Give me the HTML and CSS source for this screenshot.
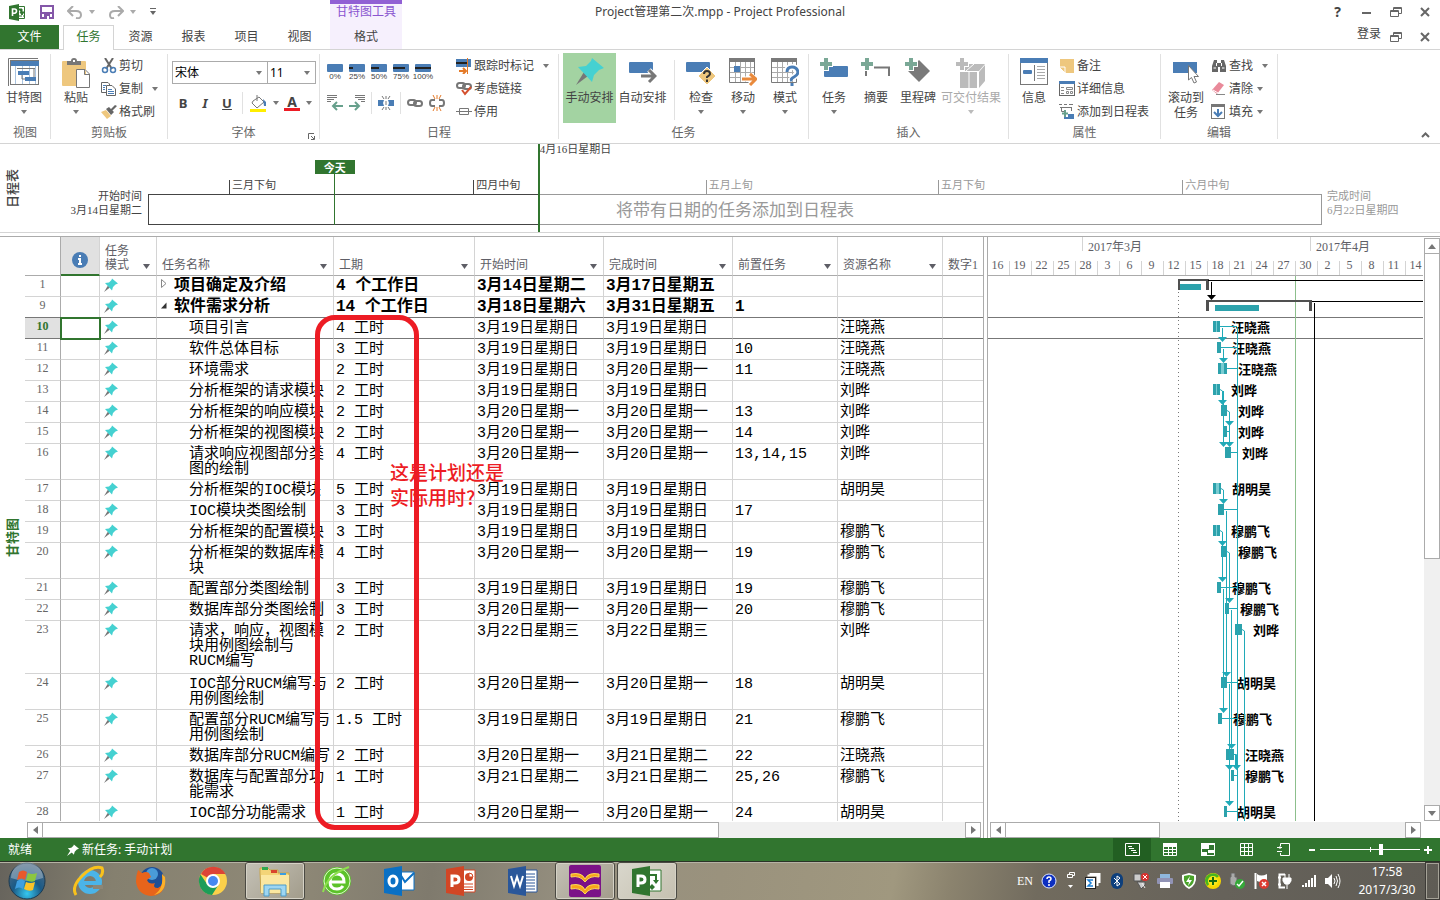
FILE: index.html
```html
<!DOCTYPE html>
<html lang="zh-CN">
<head>
<meta charset="utf-8">
<title>Project管理第二次.mpp - Project Professional</title>
<link rel="stylesheet" href="styles.css">
</head>
<body>
<svg class="defs" aria-hidden="true">
  <symbol id="pin" viewBox="0 0 28 28"><path d="M8 15 12 19 0 28Z" fill="#777"/><path d="M16 1 28 11 23 13 18 18 16 25 2 10 10 9 15 4Z" fill="#45d1d1"/></symbol>
  <symbol id="pinw" viewBox="0 0 28 28"><path d="M8 15 12 19 0 28Z" fill="#fff"/><path d="M16 1 28 11 23 13 18 18 16 25 2 10 10 9 15 4Z" fill="#fff"/></symbol>
  <symbol id="car" viewBox="0 0 6 4"><path d="M0 0H6L3 4Z" fill="currentColor"/></symbol>
  <symbol id="car2" viewBox="0 0 8 5"><path d="M0 0H7L3.500 5Z" fill="currentColor"/></symbol>
  <symbol id="restore" viewBox="0 0 12 10"><path d="M3.500 3V.5H11.500V6.500H9M.5 3.500H8.500V9.500H.5ZM3 1.500H11M1 4.500H8" fill="none" stroke="#666"/></symbol>
  <symbol id="close" viewBox="0 0 10 10"><path d="M1 1 9 9M9 1 1 9" stroke="#666" stroke-width="2"/></symbol>
  <symbol id="chain" viewBox="0 0 16 10"><g fill="none" stroke="#777" stroke-width="2"><rect x="1" y="2" width="8" height="5" rx="2.500"/><rect x="7" y="3" width="8" height="5" rx="2.500"/></g></symbol>
  <symbol id="grid" viewBox="0 0 28 26"><rect x="0" y="0" width="26" height="4" fill="#7a7a7a"/><path d="M.5 4V24.500H25.500V4" fill="#fff" stroke="#7a7a7a"/><path d="M6.500 4V24M11.500 4V24M16.500 4V24M21.500 4V24M1 9.500H25M1 14.500H25M1 19.500H25" stroke="#aaa"/></symbol>
  <symbol id="plus" viewBox="0 0 12 12"><path d="M4 0H8V4H12V8H8V12H4V8H0V4H4Z" fill="currentColor"/></symbol>
</svg>

<header class="top">
  <div class="qat">
    <svg width="18" height="17" viewBox="0 0 18 17"><path d="M8 2.500H15.500V14.500H8" fill="#fff" stroke="#31752f"/><path d="M9 5H13V9M11 8H15L13 11ZM9 12H13M14 12H16" stroke="#31752f" fill="#31752f"/><path d="M0 2 10 0V17L0 15Z" fill="#31752f"/><path d="M3.500 12V5H5.500Q7.500 5 7.500 7T5.500 9.200H3.500" stroke="#fff" stroke-width="1.600" fill="none"/></svg>
    <button aria-label="保存"><svg width="14" height="14"><path d="M1 1H13V13H1Z" fill="#fff" stroke="#8457a8" stroke-width="2"/><path d="M1 7H13V9H1ZM4 9H10V14H4Z" fill="#8457a8"/><path d="M7 11H9V14H7Z" fill="#fff"/></svg></button>
    <button class="muted" aria-label="撤销"><svg width="16" height="13"><path d="M6 0 1 5 6 10M2 5H9Q14 5 14 9T9 12" fill="none" stroke="#aaa" stroke-width="2"/></svg><svg class="c"><use href="#car"/></svg></button>
    <button class="muted redo" aria-label="恢复"><svg width="16" height="13"><path d="M10 0 15 5 10 10M14 5H7Q2 5 2 9T6 12" fill="none" stroke="#aaa" stroke-width="2"/></svg><svg class="c"><use href="#car"/></svg></button>
    <button class="custom" aria-label="自定义"><svg width="6" height="8"><path d="M0 .5H6" stroke="#666"/><path d="M0 3H6L3 7Z" fill="#666"/></svg></button>
  </div>
  <h1 class="title">Project管理第二次.mpp - Project Professional</h1>
  <nav class="tabs">
    <button class="file">文件</button><button class="active">任务</button><button>资源</button><button>报表</button><button>项目</button><button>视图</button>
  </nav>
  <div class="context"><span>甘特图工具</span><button>格式</button></div>
  <div class="win"><button class="help" aria-label="帮助">?</button><button aria-label="最小化"><svg width="9" height="4"><path d="M0 3H9" stroke="#666" stroke-width="2"/></svg></button><button aria-label="还原"><svg width="12" height="10"><use href="#restore"/></svg></button><button aria-label="关闭"><svg width="10" height="10"><use href="#close"/></svg></button></div>
  <div class="win two"><a href="#" class="login">登录</a><button aria-label="还原文档"><svg width="12" height="10"><use href="#restore"/></svg></button><button aria-label="关闭文档"><svg width="10" height="10"><use href="#close"/></svg></button></div>
</header>

<section class="ribbon">
  <div class="group g-view"><div class="gb">
    <button class="big"><svg width="32" height="28"><path d="M.5 28V.5H30" fill="none" stroke="#777"/><rect x="2.500" y="2.500" width="28" height="24" fill="#fff" stroke="#777"/><rect x="3" y="3" width="28" height="5" fill="#4a7db5"/><path d="M7.500 8V26M14.500 8V26M21.500 8V26M27.500 8V26" stroke="#aac4e0"/><path d="M9 10.500H20M26 10V20M20 10.500H27M14 16V21H18" stroke="#777" fill="none"/><rect x="10" y="13" width="11" height="4" fill="#4a7db5"/><rect x="17" y="19" width="11" height="4" fill="#4a7db5"/></svg><span>甘特图</span><svg class="c"><use href="#car"/></svg></button>
  </div><h2>视图</h2></div>

  <div class="group g-clip"><div class="gb">
    <button class="big"><svg width="30" height="30"><rect x="1" y="3" width="24" height="25" rx="1" fill="#eec77e"/><path d="M6 7V3H10Q10 0 13 0T16 3H20V7Z" fill="#777"/><rect x="12" y="2" width="2" height="2" fill="#fff"/><path d="M15.500 11.500H24L28.500 16V29.500H15.500ZM23.500 12V16.500H28" fill="#fff" stroke="#777"/></svg><span>粘贴</span><svg class="c"><use href="#car"/></svg></button>
    <div class="col">
      <button><svg width="16" height="16"><path d="M4 0 11 11M12 0 5 11" stroke="#666" stroke-width="2"/><circle cx="4" cy="12" r="2.500" fill="none" stroke="#4a7db5" stroke-width="1.500"/><circle cx="12" cy="12" r="2.500" fill="none" stroke="#4a7db5" stroke-width="1.500"/></svg>剪切</button>
      <button><svg width="16" height="16"><path d="M.5 1.500H7L8.500 3V11.500H.5Z" fill="#fff" stroke="#666"/><path d="M5.500 4.500H11L14.500 8V14.500H5.500Z" fill="#fff" stroke="#666"/><path d="M2 4.500H5M2 6.500H4M2 8.500H4M7 8.500H11M7 10.500H13M7 12.500H13" stroke="#4a7db5"/></svg>复制<svg class="c far"><use href="#car"/></svg></button>
      <button><svg width="16" height="16"><path d="M0 8 5 6 10 12 6 15Z" fill="#eec77e"/><path d="M5 5 8 3 13 8 10 11ZM10 5 14 1 16 2 11 7Z" fill="#666"/></svg>格式刷</button>
    </div>
  </div><h2>剪贴板</h2></div>

  <div class="group g-font"><div class="gb stack">
    <div class="selects"><label class="sel"><select aria-label="字体"><option>宋体</option></select><svg class="c"><use href="#car"/></svg></label><label class="sel size"><select aria-label="字号"><option>11</option></select><svg class="c"><use href="#car"/></svg></label></div>
    <div class="fmt"><button><b>B</b></button><button><i>I</i></button><button><u>U</u></button><hr>
      <button class="w" aria-label="背景色"><svg width="17" height="17"><path d="M3 6 9 2 14 7 7 13 2 8Z" fill="#fff" stroke="#777"/><path d="M7 0V6" stroke="#777"/><path d="M13 4 16 7V11H14Z" fill="#4a7db5"/><rect x="0" y="14" width="16" height="3" fill="#ffee00"/></svg><svg class="c"><use href="#car"/></svg></button>
      <button class="w" aria-label="字体颜色"><span class="fc">A</span><svg class="c"><use href="#car"/></svg></button></div>
  </div><h2>字体<svg class="launch" width="7" height="7"><path d="M.5 6V.5H6M3 3 6 6M6.500 3V6.500H3" fill="none" stroke="#666"/></svg></h2></div>

  <div class="group g-sched"><div class="gb">
    <div class="stack">
      <div class="pcts">
        <button><svg width="16" height="8"><rect width="16" height="8" rx="1" fill="#4a7db5"/></svg>0%</button>
        <button><svg width="16" height="8"><rect width="16" height="8" rx="1" fill="#4a7db5"/><path d="M0 4H4" stroke="#222" stroke-width="2"/></svg>25%</button>
        <button><svg width="16" height="8"><rect width="16" height="8" rx="1" fill="#4a7db5"/><path d="M0 4H8" stroke="#222" stroke-width="2"/></svg>50%</button>
        <button><svg width="16" height="8"><rect width="16" height="8" rx="1" fill="#4a7db5"/><path d="M0 4H12" stroke="#222" stroke-width="2"/></svg>75%</button>
        <button><svg width="16" height="8"><rect width="16" height="8" rx="1" fill="#4a7db5"/><path d="M0 4H16" stroke="#222" stroke-width="2"/></svg>100%</button>
      </div>
      <div class="links">
        <button aria-label="降级"><svg width="17" height="16"><path d="M0 .5H10M0 2.500H10M0 4.500H7M0 6.500H4" stroke="#777"/><path d="M16 11H6M10 7 6 11 10 15" fill="none" stroke="#67a08c" stroke-width="2"/></svg></button>
        <button aria-label="升级"><svg width="17" height="16"><path d="M6 .5H16M6 2.500H16M9 4.500H16M12 6.500H16" stroke="#777"/><path d="M0 11H10M6 7 10 11 6 15" fill="none" stroke="#67a08c" stroke-width="2"/></svg></button><hr>
        <button aria-label="拆分"><svg width="16" height="14"><path d="M0 4H6L5 7 6 10H0ZM16 4H10L11 7 10 10H16Z" fill="#4a7db5"/><path d="M8 0V3M8 11V14M4 0 6 3M12 0 10 3M4 14 6 11M12 14 10 11M8 5V9" stroke="#777"/></svg></button><hr>
        <button aria-label="链接"><svg width="16" height="10"><use href="#chain"/></svg></button>
        <button aria-label="取消链接"><svg width="16" height="16"><path d="M6 5H3Q1 5 1 8T3 11H6M10 5H13Q15 5 15 8T13 11H10" fill="none" stroke="#777" stroke-width="2"/><path d="M8 0V4M4 0 6 4M12 0 10 4M8 12V16M4 16 6 12M12 16 10 12" stroke="#e47a28"/></svg></button>
      </div>
    </div>
    <div class="col">
      <button><svg width="16" height="16"><rect x="0" y="1" width="15" height="8" fill="#4a7db5"/><path d="M0 5H12" stroke="#222" stroke-width="2"/><path d="M11.500 0V16" stroke="#e47a28"/><path d="M3 13H9M7 10 10 13 7 16" fill="none" stroke="#e47a28" stroke-width="2"/></svg>跟踪时标记<svg class="c far"><use href="#car"/></svg></button>
      <button><svg width="16" height="15"><svg width="16" height="10"><use href="#chain"/></svg><path d="M6 9 9 13 15 6" fill="none" stroke="#d4502e" stroke-width="2"/></svg>考虑链接</button>
      <button><svg width="16" height="10"><path d="M0 4.500H16M3.500 1.500H12.500V7.500H3.500Z" fill="none" stroke="#777"/></svg>停用</button>
    </div>
  </div><h2>日程</h2></div>

  <div class="group g-task"><div class="gb">
    <button class="big manual"><svg width="28" height="28"><use href="#pin"/></svg><span>手动安排</span></button>
    <button class="big auto"><svg width="28" height="26"><rect y="4" width="24" height="11" rx="1" fill="#4a7db5"/><path d="M11 18H25M20 12 26 18 20 24" fill="none" stroke="#fff" stroke-width="5"/><path d="M12 18H25M20 12 26 18 20 24" fill="none" stroke="#777" stroke-width="3"/></svg><span>自动安排</span></button><hr>
    <button class="big"><svg width="30" height="28"><rect y="4" width="24" height="10" rx="1" fill="#4a7db5"/><path d="M21 9 30 18 21 27 12 18Z" fill="#eec77e" stroke="#fff"/><path d="M18 16Q18 13 21 13T24 16Q24 17 21 19V20M21 21.500V24" fill="none" stroke="#333" stroke-width="2"/></svg><span>检查</span><svg class="c"><use href="#car"/></svg></button>
    <button class="big"><svg width="28" height="28"><svg width="28" height="26"><use href="#grid"/></svg><rect x="5" y="8" width="6" height="6" fill="#4a7db5"/><path d="M12 21H25M21 16 26 21 21 26" fill="none" stroke="#fff" stroke-width="5"/><path d="M13 21H26M21 16 27 21 21 27" fill="none" stroke="#e98a3c" stroke-width="3"/></svg><span>移动</span><svg class="c"><use href="#car"/></svg></button>
    <button class="big"><svg width="28" height="28"><svg width="28" height="26"><use href="#grid"/></svg><path d="M16 14Q16 9 21 9T26 14Q26 17 23 19T21 23M21 25V28" fill="none" stroke="#fff" stroke-width="6"/><path d="M16 14Q16 9 21 9T27 14Q27 17 23 19T21 23M21 25V28" fill="none" stroke="#4a7db5" stroke-width="3"/></svg><span>模式</span><svg class="c"><use href="#car"/></svg></button>
  </div><h2>任务</h2></div>

  <div class="group g-ins"><div class="gb">
    <button class="big"><svg class="teal" width="28" height="28"><rect x="4" y="8" width="24" height="11" rx="1" fill="#4a7db5"/><path d="M3 0H9V3H13V9H9V13H3Z" fill="#fff"/><svg width="12" height="12"><use href="#plus"/></svg></svg><span>任务</span><svg class="c"><use href="#car"/></svg></button>
    <button class="big"><svg class="teal" width="30" height="28"><path d="M5 18V9.500H28V18" fill="none" stroke="#777" stroke-width="2"/><path d="M3 6H13V12H8V13H3Z" fill="#fff"/><svg width="12" height="12"><use href="#plus"/></svg></svg><span>摘要</span></button>
    <button class="big"><svg class="teal" width="26" height="28"><path d="M14 2 25 13 14 24 3 13Z" fill="#7a7a7a"/><path d="M3 0H9V3H13V9H9V13H3Z" fill="#fff"/><svg width="12" height="12"><use href="#plus"/></svg></svg><span>里程碑</span></button>
    <button class="big wide" disabled><svg width="30" height="30"><path d="M4 13 11 6H29L23 13ZM4 14H21V30H4ZM23 14 29 7V23L23 30Z" fill="#bbb"/><path d="M10 13 18 6M13 14V30" stroke="#fff"/><path d="M3 0H9V3H13V9H9V13H3Z" fill="#fff"/><svg width="12" height="12"><use href="#plus"/></svg></svg><span>可交付结果</span><svg class="c"><use href="#car"/></svg></button>
  </div><h2>插入</h2></div>

  <div class="group g-prop"><div class="gb">
    <button class="big"><svg width="28" height="28"><rect x=".5" y=".5" width="27" height="26" fill="#fff" stroke="#777"/><rect width="28" height="5" fill="#4a7db5"/><rect x="3" y="12" width="9" height="4" rx="1" fill="#4a7db5"/><path d="M14.500 7V23" stroke="#777"/><path d="M17 8.500H25M17 11.500H25M17 14.500H25M17 17.500H25M17 20.500H25" stroke="#aaa"/></svg><span>信息</span></button>
    <div class="col">
      <button><svg width="16" height="16"><path d="M1 1H15V15H7L1 9Z" fill="#eec77e"/><path d="M0 9H6V15Z" fill="#eec77e" stroke="#fff"/></svg>备注</button>
      <button><svg width="16" height="16"><rect x=".5" y=".5" width="15" height="14" fill="#fff" stroke="#666"/><rect width="16" height="3" fill="#4a7db5"/><path d="M2 6.500H5M2 9.500H5M2 12.500H5" stroke="#888"/><path d="M7.500 6.500H13.500V8.500H7.500ZM7.500 10.500H9.500V12.500H7.500ZM11.500 10.500H13.500V12.500H11.500Z" fill="none" stroke="#888"/></svg>详细信息</button>
      <button><svg width="16" height="16"><path d="M0 .5H3M5 .5H8M10 .5H14M1 3.500H13M2.500 4V7.500H5M12.500 4V7" fill="none" stroke="#777"/><path d="M6 6V13M3 9.500H9" stroke="#67a08c" stroke-width="2"/><path d="M9 10H15V15H5V13H9Z" fill="#4a7db5"/></svg>添加到日程表</button>
    </div>
  </div><h2>属性</h2></div>

  <div class="group g-edit"><div class="gb">
    <button class="big"><svg width="26" height="26"><rect y="4" width="24" height="11" fill="#4a7db5"/><path d="M15.500 7.500V22L18.500 19.500 21 25 23.500 24 21 18.500H25.500Z" fill="#fff" stroke="#777"/></svg><span>滚动到任务</span></button>
    <div class="col">
      <button><svg width="16" height="16"><path d="M3 2H6V5H10V2H13L15 8V14H9V9H7V14H1V8Z" fill="#666"/><path d="M2.500 10H5M11 10H13.500M5.500 5V8M10.500 5V8" stroke="#fff"/></svg>查找<svg class="c far"><use href="#car"/></svg></button>
      <button><svg width="16" height="14"><path d="M1 8 8 0 13 3 6 12Z" fill="#e98a9a"/><path d="M2 8 7 11" stroke="#fff"/><path d="M5 12.500H14" stroke="#888"/></svg>清除<svg class="c"><use href="#car"/></svg></button>
      <button><svg width="16" height="16"><rect x=".5" y=".5" width="13" height="14" fill="#fff" stroke="#777"/><rect width="14" height="3" fill="#777"/><path d="M7 5V12M3 8 7 12 11 8" fill="none" stroke="#4a7db5" stroke-width="2"/></svg>填充<svg class="c"><use href="#car"/></svg></button>
    </div>
  </div><h2>编辑</h2></div>
  <button class="collapse" aria-label="折叠功能区"><svg width="9" height="6"><path d="M1 5 4.500 1.500 8 5" fill="none" stroke="#666" stroke-width="2"/></svg></button>
</section>

<section class="timeline">
  <h3 class="rail">日程表</h3>
  <p class="ends start">开始时间<br>3月14日星期二</p>
  <div class="tl">
    <div class="bar">将带有日期的任务添加到日程表</div>
    <span class="tick t1">三月下旬</span><span class="tick t2">四月中旬</span><span class="tick grey t3">五月上旬</span><span class="tick grey t4">五月下旬</span><span class="tick grey t5">六月中旬</span>
    <div class="today"><b>今天</b></div>
    <div class="focus">4月16日星期日</div>
  </div>
  <p class="ends end">完成时间<br>6月22日星期四</p>
</section>

<main>
  <h3 class="rail green">甘特图</h3>
  <div class="pane">
    <div class="clip">
    <table>
      <colgroup><col class="c0"><col class="c1"><col class="c2"><col class="c3"><col class="c4"><col class="c5"><col class="c6"><col class="c7"><col class="c8"><col class="c9"></colgroup>
      <thead><tr><th></th><th class="info"><svg width="16" height="16"><circle cx="8" cy="8" r="8" fill="#4a7db5"/><path d="M8 3V5M6 7H8V12M6 12H10" fill="none" stroke="#fff" stroke-width="2"/></svg></th><th><span>任务<br>模式</span><svg class="k"><use href="#car2"/></svg></th><th>任务名称<svg class="k"><use href="#car2"/></svg></th><th>工期<svg class="k"><use href="#car2"/></svg></th><th>开始时间<svg class="k"><use href="#car2"/></svg></th><th>完成时间<svg class="k"><use href="#car2"/></svg></th><th>前置任务<svg class="k"><use href="#car2"/></svg></th><th>资源名称<svg class="k"><use href="#car2"/></svg></th><th>数字1</th></tr></thead>
      <tbody>
        <tr class="sum"><td>1<td><td><svg class="p"><use href="#pin"/></svg><td><svg class="exp" width="6" height="9"><path d="M.5 .5 5 4.500 .5 8.500Z" fill="#fff" stroke="#888"/></svg>项目确定及介绍<td>4 个工作日<td>3月14日星期二<td>3月17日星期五<td><td><td></tr>
        <tr class="sum"><td>9<td><td><svg class="p"><use href="#pin"/></svg><td><svg class="exp" width="6" height="7"><path d="M5.500 .5V6.500H0Z" fill="#333"/></svg>软件需求分析<td>14 个工作日<td>3月18日星期六<td>3月31日星期五<td>1<td><td></tr>
        <tr class="cur"><td>10<td><td><svg class="p"><use href="#pin"/></svg><td>项目引言<td>4 工时<td>3月19日星期日<td>3月19日星期日<td><td>汪晓燕<td></tr>
        <tr><td>11<td><td><svg class="p"><use href="#pin"/></svg><td>软件总体目标<td>3 工时<td>3月19日星期日<td>3月19日星期日<td>10<td>汪晓燕<td></tr>
        <tr><td>12<td><td><svg class="p"><use href="#pin"/></svg><td>环境需求<td>2 工时<td>3月19日星期日<td>3月20日星期一<td>11<td>汪晓燕<td></tr>
        <tr><td>13<td><td><svg class="p"><use href="#pin"/></svg><td>分析框架的请求模块<td>2 工时<td>3月19日星期日<td>3月19日星期日<td><td>刘晔<td></tr>
        <tr><td>14<td><td><svg class="p"><use href="#pin"/></svg><td>分析框架的响应模块<td>2 工时<td>3月20日星期一<td>3月20日星期一<td>13<td>刘晔<td></tr>
        <tr><td>15<td><td><svg class="p"><use href="#pin"/></svg><td>分析框架的视图模块<td>2 工时<td>3月20日星期一<td>3月20日星期一<td>14<td>刘晔<td></tr>
        <tr><td>16<td><td><svg class="p"><use href="#pin"/></svg><td>请求响应视图部分类<br>图的绘制<td>4 工时<td>3月20日星期一<td>3月20日星期一<td>13,14,15<td>刘晔<td></tr>
        <tr><td>17<td><td><svg class="p"><use href="#pin"/></svg><td>分析框架的IOC模块<td>5 工时<td>3月19日星期日<td>3月19日星期日<td><td>胡明昊<td></tr>
        <tr><td>18<td><td><svg class="p"><use href="#pin"/></svg><td>IOC模块类图绘制<td>3 工时<td>3月19日星期日<td>3月19日星期日<td>17<td><td></tr>
        <tr><td>19<td><td><svg class="p"><use href="#pin"/></svg><td>分析框架的配置模块<td>3 工时<td>3月19日星期日<td>3月19日星期日<td><td>穆鹏飞<td></tr>
        <tr><td>20<td><td><svg class="p"><use href="#pin"/></svg><td>分析框架的数据库模<br>块<td>4 工时<td>3月20日星期一<td>3月20日星期一<td>19<td>穆鹏飞<td></tr>
        <tr><td>21<td><td><svg class="p"><use href="#pin"/></svg><td>配置部分类图绘制<td>3 工时<td>3月19日星期日<td>3月19日星期日<td>19<td>穆鹏飞<td></tr>
        <tr><td>22<td><td><svg class="p"><use href="#pin"/></svg><td>数据库部分类图绘制<td>3 工时<td>3月20日星期一<td>3月20日星期一<td>20<td>穆鹏飞<td></tr>
        <tr class="tall"><td>23<td><td><svg class="p"><use href="#pin"/></svg><td>请求，响应，视图模<br>块用例图绘制与<br>RUCM编写<td>2 工时<td>3月22日星期三<td>3月22日星期三<td><td>刘晔<td></tr>
        <tr><td>24<td><td><svg class="p"><use href="#pin"/></svg><td>IOC部分RUCM编写与<br>用例图绘制<td>2 工时<td>3月20日星期一<td>3月20日星期一<td>18<td>胡明昊<td></tr>
        <tr><td>25<td><td><svg class="p"><use href="#pin"/></svg><td>配置部分RUCM编写与<br>用例图绘制<td>1.5 工时<td>3月19日星期日<td>3月19日星期日<td>21<td>穆鹏飞<td></tr>
        <tr><td>26<td><td><svg class="p"><use href="#pin"/></svg><td>数据库部分RUCM编写<td>2 工时<td>3月20日星期一<td>3月21日星期二<td>22<td>汪晓燕<td></tr>
        <tr><td>27<td><td><svg class="p"><use href="#pin"/></svg><td>数据库与配置部分功<br>能需求<td>1 工时<td>3月21日星期二<td>3月21日星期二<td>25,26<td>穆鹏飞<td></tr>
        <tr><td>28<td><td><svg class="p"><use href="#pin"/></svg><td>IOC部分功能需求<td>1 工时<td>3月20日星期一<td>3月20日星期一<td>24<td>胡明昊<td></tr>
      </tbody>
    </table>
    </div>
    <div class="hs"><button aria-label="向左"><svg width="5" height="8"><path d="M5 0V8L0 4Z" fill="#777"/></svg></button><i class="thumb t-left"></i><button aria-label="向右"><svg width="5" height="8"><path d="M0 0V8L5 4Z" fill="#777"/></svg></button></div>
  </div>

  <div class="gantt">
    <div class="months"><span></span><span>2017年3月</span><span>2017年4月</span></div>
    <div class="days"><span>16</span><span>19</span><span>22</span><span>25</span><span>28</span><span>3</span><span>6</span><span>9</span><span>12</span><span>15</span><span>18</span><span>21</span><span>24</span><span>27</span><span>30</span><span>2</span><span>5</span><span>8</span><span>11</span><span>14</span></div>
    <div class="clip">
    <svg class="chart" width="435" height="545" viewBox="988 276 435 545">
      <path d="M988 317.500H1423M988 338.500H1423" stroke="#777"/>
      <path d="M1178.500 292V821" stroke="#777" stroke-dasharray="1 3"/>
      <path d="M1295.500 276V821" stroke="#8cbf8c"/>
      <g class="names">
        <text x="1231" y="332">汪晓燕</text><text x="1232" y="353">汪晓燕</text><text x="1238" y="374">汪晓燕</text><text x="1231" y="395">刘晔</text><text x="1238" y="416">刘晔</text><text x="1238" y="437">刘晔</text><text x="1242" y="458">刘晔</text><text x="1232" y="494">胡明昊</text><text x="1231" y="536">穆鹏飞</text><text x="1238" y="557">穆鹏飞</text><text x="1232" y="593">穆鹏飞</text><text x="1240" y="614">穆鹏飞</text><text x="1253" y="635">刘晔</text><text x="1237" y="688">胡明昊</text><text x="1233" y="724">穆鹏飞</text><text x="1245" y="760">汪晓燕</text><text x="1245" y="781">穆鹏飞</text><text x="1237" y="817">胡明昊</text>
      </g>
      <path d="M1178 279H1209V290H1206V281H1180V290H1178ZM1206 300H1312V311H1309V302H1209V311H1206Z" fill="#505050"/>
      <path d="M1208 280.500H1423M1211.500 282V296M1312 301.500H1423M1314.500 303V821" stroke="#000" fill="none"/>
      <path d="M1207 295H1216L1211.500 300Z"/>
      <path fill="#2ca2ac" d="M1180 284h21v6h-21zM1215 305h44v6h-44zM1213 321h7v11h-7zM1217 342h4v11h-4zM1218 363h9v11h-9zM1213 384h7v11h-7zM1221 405h6v11h-6zM1223 426h4v11h-4zM1225 447h6v11h-6zM1213 483h8v11h-8zM1218 504h6v11h-6zM1213 525h7v11h-7zM1221 546h6v11h-6zM1217 582h4v11h-4zM1225 603h4v11h-4zM1235 624h7v11h-7zM1221 677h6v11h-6zM1218 713h4v11h-4zM1226 749h8v11h-8zM1231 770h3v11h-3zM1224 806h3v11h-3z"/>
      <path stroke="#7accd2" d="M1216.500 321v11M1216.500 384v11M1216.500 525v11" />
      <path stroke="#7accd2" stroke-width="3" d="M1222.500 363v11M1217.500 483v11"/>
      <path fill="none" stroke="#20aab8" d="M1220 326.500H1237M1237.500 327V821M1222.500 328V338M1221 347.500H1237M1223.500 349V359M1227 368.500H1237M1220 389.500L1222.500 391V401M1223.500 391V443M1227 410.500L1229.500 412V443M1227 431.500H1230M1231 452.500H1237M1221 488.500L1223.500 490V500M1224 509.500H1237M1226.500 511V673M1220 530.500L1222.500 532V578M1227 551.500L1229.500 553V599M1221 587.500H1237M1223.500 589V709M1229 608.500H1237M1231.500 610V745M1242 629.500L1244.500 631V821M1227 682.500H1237M1229.500 684V802M1222 718.500H1237M1234 754.500H1236.500V766M1235.500 755V766M1234 775.500H1237M1227 811.500H1237"/>
      <path fill="#20aab8" d="M1218 337h9l-4.500 5zM1219 358h9l-4.500 5zM1218 400h9l-4.500 5zM1225 421h9l-4.500 5zM1219 442h9l-4.500 5zM1225 442h9l-4.500 5zM1219 499h9l-4.500 5zM1218 541h9l-4.500 5zM1218 577h9l-4.500 5zM1225 598h9l-4.500 5zM1222 672h9l-4.500 5zM1219 708h9l-4.500 5zM1227 744h9l-4.500 5zM1225 765h9l-4.500 5zM1232 765h9l-4.500 5zM1225 801h9l-4.500 5z"/>
    </svg>
    </div>
    <div class="hs"><button aria-label="向左"><svg width="5" height="8"><path d="M5 0V8L0 4Z" fill="#777"/></svg></button><i class="thumb t-right"></i><button aria-label="向右"><svg width="5" height="8"><path d="M0 0V8L5 4Z" fill="#777"/></svg></button></div>
  </div>
  <div class="vs"><button aria-label="向上"><svg width="8" height="5"><path d="M0 5H8L4 0Z" fill="#777"/></svg></button><i class="thumb"></i><button aria-label="向下"><svg width="8" height="5"><path d="M0 0H8L4 5Z" fill="#777"/></svg></button></div>
  <div class="mark"></div>
  <p class="note">这是计划还是<br>实际用时?</p>
</main>

<footer class="status">
  <span class="ready">就绪</span><svg width="12" height="12"><use href="#pinw"/></svg><span>新任务: 手动计划</span>
  <div class="views">
    <button class="on" aria-label="甘特图"><svg width="15" height="13"><path d="M.5 .5H14.500V12.500H.5ZM3 3.500H7M4 5.500H9M6 7.500H11M8 9.500H12" fill="none" stroke="#fff"/></svg></button>
    <button aria-label="任务分配状况"><svg width="15" height="13"><path d="M.5 .5H13.500V12.500H.5ZM5.500 3V12M9.500 3V12M1 6.500H13M1 9.500H13" fill="none" stroke="#fff"/><rect width="14" height="4" fill="#fff"/></svg></button>
    <button aria-label="工作组规划器"><svg width="15" height="13"><path d="M.5 .5H13.500V12.500H.5Z" fill="none" stroke="#fff"/><path d="M0 0H14V2H8V6H0ZM7 7H14V10H7ZM0 9H6V13H0Z" fill="#fff"/></svg></button>
    <button aria-label="资源工作表"><svg width="13" height="13"><path d="M.5 .5H12.500V12.500H.5ZM4.500 0V13M8.500 0V13M0 4.500H13M0 8.500H13" fill="none" stroke="#fff"/></svg></button>
    <button aria-label="报表"><svg width="14" height="13"><path d="M3.500 3V.5H12.500V12.500H3.500V10M0 4.500H5M0 8.500H5M3 3V6" fill="none" stroke="#fff"/></svg></button>
  </div>
  <div class="zoom"><button aria-label="缩小"><svg width="6" height="2"><rect width="6" height="2" fill="#fff"/></svg></button><input type="range" aria-label="显示比例" min="0" max="100" value="61"><button aria-label="放大"><svg width="8" height="8"><path d="M4 0V8M0 4H8" stroke="#fff" stroke-width="2"/></svg></button></div>
</footer>

<footer class="taskbar">
  <button class="startb" aria-label="开始"><svg width="38" height="38"><defs><radialGradient id="orb" cx=".5" cy=".85" r=".8"><stop offset="0" stop-color="#35c8f0"/><stop offset=".5" stop-color="#1b5a86"/><stop offset="1" stop-color="#4d6b86"/></radialGradient></defs><circle cx="19" cy="19" r="18" fill="url(#orb)" stroke="#1d3a50"/><path d="M3 16A16 16 0 0 1 35 16Q19 22 3 16Z" fill="#fff" opacity=".3"/><path d="M11 10Q15 7 19 10L17 18Q14 15 9 18Z" fill="#e8592b"/><path d="M20 11Q24 13 29 11L27 19Q23 21 18 18Z" fill="#8cc63e"/><path d="M9 19Q13 16 17 19L15 27Q11 24 7 27Z" fill="#3f9fe0"/><path d="M18 20Q22 22 27 20L25 28Q21 30 16 27Z" fill="#fcc328"/></svg></button>
  <button aria-label="Internet Explorer"><svg width="32" height="32"><circle cx="17" cy="17" r="9" fill="none" stroke="#4bb4e8" stroke-width="6"/><path d="M9 18H27" stroke="#4bb4e8" stroke-width="4"/><path d="M20 20H30V24H20Z" fill="#8c8676"/><path d="M3 30Q-2 22 9 11T29 3Q31 8 27 12" fill="none" stroke="#f9c21c" stroke-width="3"/></svg></button>
  <button aria-label="Firefox"><svg width="32" height="32"><circle cx="17" cy="14" r="12" fill="#1e4f96"/><circle cx="17" cy="9" r="6" fill="#4a9bd8"/><path d="M3 5 7 8Q11 6 14 8L16 12 12 15Q14 20 20 18Q17 23 23 23Q29 21 27 9 32 16 29 23Q25 31 16 31Q3 30 1 17Q1 10 3 5Z" fill="#e8641b"/><path d="M30 12Q32 27 19 30Q29 24 27 9Z" fill="#fbb12a"/></svg></button>
  <button aria-label="Chrome"><svg width="32" height="32"><circle cx="16" cy="16" r="14" fill="#fbd04a"/><path d="M16 16 4 9A14 14 0 0 1 28.500 9H16Z" fill="#dc4437"/><path d="M3.500 9.500A14 14 0 0 0 15 30L22 19 10 19Z" fill="#1d9d58"/><circle cx="16" cy="16" r="7" fill="#fff"/><circle cx="16" cy="16" r="5" fill="#4688f1"/></svg></button>
  <button class="open" aria-label="资源管理器"><svg width="34" height="32"><path d="M2 8V3H10L12 5H20V8H31V28H3Z" fill="#f3d477" stroke="#c9a64d"/><path d="M4 2H10V5H4Z" fill="#2fa84f"/><path d="M13 5H19V8H13Z" fill="#d9442c"/><path d="M22 8H28V10H22Z" fill="#3b9de0"/><path d="M3 10H31V28H3Z" fill="#fbe7a0"/><path d="M6 31V20H28V31H23V24H11V31Z" fill="#9dd6f2" stroke="#4d9cc8"/></svg></button>
  <button aria-label="360浏览器"><svg width="32" height="32"><circle cx="16" cy="16" r="14" fill="#5cc22a"/><circle cx="16" cy="16" r="13" fill="none" stroke="#dff5d0"/><path d="M9 17H23Q23 9 16 9T9 17Q9 24 16 24 20 24 22 21" fill="none" stroke="#fff" stroke-width="3"/><path d="M2 27Q6 10 28 2" fill="none" stroke="#8ee04e" stroke-width="2"/></svg></button>
  <button aria-label="Outlook"><svg width="32" height="32"><path d="M16 7H31V25H16Z" fill="#fff" stroke="#0a70c4"/><path d="M17 9 22 17 31 8" fill="none" stroke="#0a70c4" stroke-width="2"/><path d="M1 4 19 1V31L1 28Z" fill="#0a70c4"/><ellipse cx="10" cy="16" rx="4" ry="5" fill="none" stroke="#fff" stroke-width="3"/></svg></button>
  <button aria-label="PowerPoint"><svg width="32" height="32"><path d="M17 5H30V27H17Z" fill="#fff" stroke="#d24625"/><circle cx="24" cy="12" r="4" fill="#d24625"/><path d="M24 12V8A4 4 0 0 1 28 12Z" fill="#fff" stroke="#d24625"/><path d="M19 19H28M19 22H28M19 24.500H28" stroke="#d24625"/><path d="M1 4 19 1V31L1 28Z" fill="#d24625"/><path d="M7 22V11H10Q14 11 14 14.500T10 18H7" fill="none" stroke="#fff" stroke-width="3"/></svg></button>
  <button aria-label="Word"><svg width="32" height="32"><path d="M17 5H30V27H17Z" fill="#fff" stroke="#2a579a"/><path d="M19 9H28M19 12H28M19 15H28M19 18H28M19 21H28M19 24H28" stroke="#2a579a"/><path d="M1 4 19 1V31L1 28Z" fill="#2a579a"/><path d="M4 11 7 21 10 12 13 21 16 11" fill="none" stroke="#fff" stroke-width="2"/></svg></button>
  <button class="open" aria-label="阅读"><svg width="34" height="32"><rect x="1" width="32" height="32" rx="2" fill="#7b1287"/><path d="M3 9Q14 7 17 14 20 7 31 9V12Q22 10 17 17 12 10 3 12ZM3 20Q14 18 17 25 20 18 31 20V24Q22 22 17 29 12 22 3 24Z" fill="#f9a41c" stroke="#fbe05a"/></svg></button>
  <button class="open lit" aria-label="Project"><svg width="32" height="32"><path d="M17 5H30V26H17Z" fill="#fff" stroke="#31752f"/><path d="M19 10H25V16" fill="none" stroke="#31752f" stroke-width="2"/><path d="M22 15H28L25 19ZM21 19 24 22 21 25 18 22Z" fill="#31752f"/><path d="M1 4 19 1V31L1 28Z" fill="#31752f"/><path d="M7 22V11H10Q14 11 14 14.500T10 18H7" fill="none" stroke="#fff" stroke-width="3"/></svg></button>
  <div class="tray">
    <span class="en">EN</span>
    <svg width="16" height="16"><circle cx="8" cy="8" r="7" fill="#0c2fc0" stroke="#dfe6ff"/><path d="M6 6Q6 4 8 4T10 6Q10 7 8 8V10M8 11V13" fill="none" stroke="#fff" stroke-width="1.500"/></svg>
    <svg class="sm" width="8" height="18"><path d="M2.500 2V.5H7.500V3.500H6M.5 2.500H5.500V5.500H.5Z" fill="none" stroke="#fff"/><path d="M1 13H6L3.500 16Z" fill="#fff"/></svg>
    <svg width="16" height="16"><path d="M4.500 .5H14.500V10M2.500 2.500H12.500V13" fill="none" stroke="#fff" stroke-width="2"/><rect x=".5" y="4.500" width="10" height="11" fill="#fff" stroke="#222"/><path d="M8 7H3L6 10 3 13H8" fill="none" stroke="#1b7fd4" stroke-width="1.500"/></svg>
    <svg width="12" height="16"><rect width="12" height="16" rx="6" fill="#0d3f7c"/><path d="M3 5 9 11 6 13V3L9 5 3 11" fill="none" stroke="#fff"/></svg>
    <svg width="16" height="16"><path d="M1 1H8V8H1ZM4 9H12V12L8 16 6 12Z" fill="#ccc" stroke="#555"/><path d="M9 10 12 15" stroke="#eee"/><circle cx="12" cy="4" r="4" fill="#d8322e"/><path d="M10 2 14 6M14 2 10 6" stroke="#fff"/></svg>
    <svg width="16" height="16"><rect x="3" y="1" width="10" height="5" fill="#8fb7dd"/><rect x="0" y="5" width="16" height="6" rx="1" fill="#9193b5"/><rect x="3" y="9" width="10" height="6" fill="#fff"/></svg>
    <svg width="16" height="16"><path d="M8 0 15 2Q16 12 8 16 0 12 1 2Z" fill="#fff"/><path d="M8 2 13 3Q14 11 8 14 2 11 3 3Z" fill="#4aa32a"/><path d="M9 3 5 9H8L7 13 11 7H8Z" fill="#fff"/></svg>
    <svg width="16" height="16"><circle cx="8" cy="8" r="8" fill="#f7d800"/><path d="M0 8A8 8 0 0 1 14 3L2 13Z" fill="#49b51f"/><circle cx="8" cy="8" r="5" fill="#f7e81a"/><path d="M8 4V12M4 8H12" stroke="#176b12" stroke-width="2"/></svg>
    <svg width="16" height="16"><path d="M2 0H6V4H8V12Q4 14 1 11V4H2Z" fill="#aaa" stroke="#666"/><circle cx="11" cy="11" r="5" fill="#35a839"/><path d="M8 11 10 13 14 8" fill="none" stroke="#fff" stroke-width="1.500"/></svg>
    <svg width="16" height="16"><path d="M2.500 0V16" stroke="#fff" stroke-width="2"/><path d="M4 1Q8 4 14 1V8Q8 10 4 8Z" fill="#fff"/><circle cx="11" cy="11" r="5" fill="#dd3b30"/><path d="M9 9 13 13M13 9 9 13" stroke="#fff" stroke-width="1.500"/></svg>
    <svg width="16" height="16"><path d="M8 1.500H2.500V14.500H8M1 4.500H4M1 11.500H4" fill="none" stroke="#fff" stroke-width="2"/><path d="M6 5H14V8L12 11H8L6 8ZM8 1V5M12 1V5M10 11V16" fill="#fff" stroke="#fff"/></svg>
    <svg width="16" height="16"><path d="M1 12H3V14H1ZM4 10H6V14H4ZM7 7H9V14H7ZM10 5H12V14H10ZM13 2H15V14H13Z" fill="#fff"/></svg>
    <svg width="16" height="16"><path d="M0 5H3L7 1V15L3 11H0Z" fill="#fff"/><path d="M9 5Q11 8 9 11M11 3Q14 8 11 13M13 1Q17 8 13 15" fill="none" stroke="#fff"/></svg>
    <time>17:58<br>2017/3/30</time>
  </div>
  <button class="desk" aria-label="显示桌面"></button>
</footer>
</body>
</html>
```
FILE: styles.css
```css
* { box-sizing: border-box; margin: 0; padding: 0; }
body { height: 100vh; display: flex; flex-direction: column; overflow: hidden; background: #fff; color: #444; font: 12px/16px "Noto Sans", "Noto Sans CJK SC", sans-serif; }
button { font: inherit; color: inherit; background: none; border: 0; display: flex; align-items: center; justify-content: center; white-space: nowrap; }
a { color: inherit; text-decoration: none; }
h1, h2, h3 { font: inherit; }
svg { flex: none; display: block; }
hr { border: 0; width: 1px; background: #e1e1e1; }
.defs { position: absolute; width: 0; height: 0; }
.c { width: 6px; height: 4px; color: #777; }

.top { flex: none; display: grid; grid-template-columns: 330px 72px 1fr; grid-template-rows: 24px 25px; border-bottom: 1px solid #d4d4d4; height: 50px; }
.qat { grid-area: 1 / 1; display: flex; align-items: center; padding-left: 9px; gap: 13px; }
.qat button { gap: 6px; }
.qat .redo { margin-left: 0; }
.qat .custom { margin-left: 1px; }
.qat .muted .c { color: #aaa; }
.title { grid-area: 1 / 1 / 2 / -1; justify-self: center; align-self: center; }
.tabs { grid-area: 2 / 1; display: flex; z-index: 1; margin-bottom: -1px; padding-top: 1px; }
.tabs button { width: 53px; padding-bottom: 2px; }
.tabs .file { width: 59px; margin-right: 4px; background: #31752f; color: #fff; margin-bottom: 1px; padding-bottom: 1px; }
.tabs .active { width: 51px; color: #31752f; background: #fff; border: 1px solid #d4d4d4; border-bottom: 0; }
.context { grid-area: 1 / 2 / 3 / 3; border-top: 4px solid #9160d4; background: #f6f0fd; color: #8a55d0; text-align: center; display: flex; flex-direction: column; height: 49px; }
.context span { height: 20px; }
.context button { color: #444; flex: 1; }
.win { grid-area: 1 / 3; justify-self: end; display: flex; z-index: 1; padding-right: 1px; }
.win button { width: 29px; }
.win .help { font-weight: bold; font-size: 14px; }
.win.two { grid-area: 2 / 3; }
.login { align-self: flex-start; padding-top: 2px; }

.ribbon { flex: none; display: flex; height: 94px; padding: 4px 0; border-bottom: 1px solid #d4d4d4; position: relative; }
.group { flex: none; display: flex; flex-direction: column; border-right: 1px solid #e1e1e1; }
.gb { display: flex; flex: none; height: 72px; padding-left: 4px; }
.gb > hr { margin: 6px 5px; }
.group h2 { text-align: center; color: #666; position: relative; line-height: 14px; }
.g-view { width: 51px; } .g-clip { width: 117px; } .g-font { width: 152px; } .g-sched { width: 239px; } .g-task { width: 250px; } .g-ins { width: 200px; } .g-prop { width: 152px; } .g-edit { width: 117px; }
.big { width: 42px; height: 72px; flex-direction: column; justify-content: flex-start; padding-top: 4px; }
.big > svg:first-child { margin-bottom: auto; }
.big span { height: 20px; }
.big .c { margin: 0 0 12px; }
.big span:last-child { margin-bottom: 16px; }
.big:disabled { color: #aaa; }
.big:disabled .c, .big:disabled svg { color: #bbb; }
.big.manual { width: 53px; height: 70px; background: #a3d3a2; margin-top: -1px; }
.big.manual span { margin-bottom: 13px; }
.big.auto { width: 53px; }
.big.wide { width: 64px; }
.teal { color: #7aa896; }
.g-edit .big span { width: 36px; white-space: normal; line-height: 15px; height: 30px; margin-bottom: 6px; }
.g-view .gb { padding-left: 3px; }
.col { display: flex; flex-direction: column; padding-left: 4px; }
.col button { height: 23px; gap: 2px; justify-content: flex-start; }
.col .c { margin-left: 2px; }
.col .far { margin-left: 7px; }
.stack { display: flex; flex-direction: column; }
.selects { display: flex; padding-top: 7px; }
.sel { display: grid; width: 96px; height: 23px; border: 1px solid #ababab; align-items: center; }
.sel.size { width: 49px; margin-left: -1px; }
.sel select, .sel .c { grid-area: 1 / 1; }
.sel select { appearance: none; border: 0; background: none; padding-left: 2px; font: inherit; color: #000; height: 21px; }
.sel .c { justify-self: end; margin-right: 5px; }
.fmt { display: flex; height: 22px; margin-top: 8px; align-items: stretch; font-size: 13px; }
.fmt button { width: 22px; }
.fmt b, .fmt i, .fmt u { font-weight: bold; }
.fmt hr { margin: 0 4px; }
.fmt .w { width: 34px; gap: 6px; }
.fc { font-weight: bold; border-bottom: 3px solid #ed1c24; line-height: 13px; width: 16px; font-size: 14px; }
.launch { position: absolute; right: 4px; bottom: 0; }
.pcts { display: flex; padding-top: 10px; }
.pcts button { width: 22px; flex-direction: column; font: 8px/10px "Liberation Sans", sans-serif; }
.links { display: flex; align-items: center; height: 22px; margin-top: 10px; }
.links button { width: 22px; }
.links hr { height: 22px; margin: 0 3px; }
.g-sched .col { padding-left: 8px; }
.collapse { position: absolute; right: 10px; bottom: 5px; }

.timeline { flex: none; display: grid; grid-template-columns: 24px 124px 1fr 118px; height: 89px; border-bottom: 1px solid #d4d4d4; font: 11px/14px "Liberation Serif", "Noto Sans CJK SC", serif; }
.rail { writing-mode: vertical-rl; text-orientation: sideways; transform: rotate(180deg); text-align: center; line-height: 24px; font: 500 13px/24px "Noto Sans CJK SC", sans-serif; }
.ends { padding-top: 45px; }
.start { text-align: right; padding-right: 6px; }
.end { padding-left: 5px; color: #999; }
.tl { position: relative; padding-top: 50px; }
.bar { height: 31px; border: 1px solid #999; text-align: center; color: #999; font: 17px/28px "Noto Sans CJK SC", sans-serif; border-image: linear-gradient(90deg, #444 33.3%, #999 33.3%) 1; }
.tick { position: absolute; top: 36px; height: 14px; line-height: 10px; padding-left: 2px; border-left: 1px solid #444; }
.tick.grey { color: #999; border-color: #999; }
.t1 { left: 6.9%; } .t2 { left: 27.7%; } .t3 { left: 47.5%; } .t4 { left: 67.3%; } .t5 { left: 88.1%; }
.today { position: absolute; left: 14.2%; top: 16px; width: 40px; height: 65px; background: linear-gradient(#31752f, #31752f) 50% 0 / 1px 100% no-repeat; }
.today b { display: block; background: #31752f; color: #fff; text-align: center; line-height: 14px; font-family: "Noto Sans CJK SC", sans-serif; }
.focus { position: absolute; left: 33.2%; top: 0; height: 88px; line-height: 11px; border-left: 2px solid #31752f; }

main { flex: 1; min-height: 0; display: flex; margin-top: 3px; border-top: 1px solid #ababab; position: relative; }
.rail.green { width: 25px; color: #31752f; font-weight: bold; }
.pane { flex: 0 1 959px; min-width: 0; display: flex; flex-direction: column; border-right: 1px solid #ababab; }
.clip { flex: 1; min-height: 0; overflow: hidden; }
table { table-layout: fixed; width: 959px; border-spacing: 0; font: 15px/15px "Liberation Mono", "Noto Sans CJK SC", monospace; color: #000; }
.c0 { width: 36px; } .c1 { width: 39px; } .c2 { width: 57px; } .c3 { width: 177px; } .c4 { width: 141px; } .c5, .c6 { width: 129px; } .c7, .c8 { width: 105px; } .c9 { width: 41px; }
th { position: relative; height: 39px; padding: 0 0 3px 5px; text-align: left; vertical-align: bottom; font: 12px/14px "Liberation Serif", "Noto Sans CJK SC", serif; color: #5e5e66; border-right: 1px solid #d4d4d4; border-bottom: 1px solid #ababab; }
th.info { background: #e1e1e1; border-bottom: 2px solid #31752f; padding: 0 0 6px 11px; }
th:first-child { border-right-color: #ababab; }
.k { position: absolute; right: 5px; bottom: 6px; width: 8px; height: 5px; color: #5e5e66; }
td { vertical-align: top; padding: 3px 0 2px 2px; border-right: 1px solid #d4d4d4; border-bottom: 1px solid #d4d4d4; white-space: nowrap; }
td:first-child { font: 12px/14px "Liberation Serif", serif; color: #666; text-align: center; border-right-color: #ababab; padding: 1px 0 0; }
td:nth-child(3) { padding: 2px 0 0 4px; }
td:nth-child(4) { padding-left: 32px; }
.p { width: 14px; height: 14px; }
.sum td:not(:first-child) { font-weight: bold; font-size: 16px; }
.sum td:nth-child(4) { padding-left: 4px; }
.exp { display: inline-block; margin-right: 7px; vertical-align: 2px; }
.tall { height: 53px; }
tr:has(+ .cur) td, .cur td { border-bottom-color: #777; }
.cur td:first-child { background: #e1e1e1; color: #31752f; font-weight: bold; }
.cur td:nth-child(2) { outline: 2px solid #31752f; outline-offset: -1px; }
.hs { flex: none; display: flex; height: 17px; padding: 1px 2px 0; background: linear-gradient(#f0f0f0, #f0f0f0) content-box; }
.hs button, .vs button { flex: none; width: 16px; height: 16px; border: 1px solid #ababab; background: #fff; }
.hs button:last-child { margin-left: auto; }
.thumb { border: 1px solid #ababab; background: #fff; }
.t-left { width: 677px; margin-left: -1px; } .t-right { width: 155px; margin-left: -1px; }
.gantt { flex: 1; min-width: 0; display: flex; flex-direction: column; margin-left: 3px; border-left: 1px solid #ababab; overflow: hidden; font: 12px/14px "Liberation Serif", "Noto Sans CJK SC", serif; color: #5e5e66; }
.months, .days { flex: none; display: flex; }
.months { height: 24px; }
.months span { flex: none; width: 95px; height: 14px; padding: 3px 0 0 5px; border-left: 1px solid #d4d4d4; white-space: nowrap; }
.months span:first-child { border: 0; width: 94px; }
.months span:nth-child(2) { width: 228px; }
.days { height: 15px; border-bottom: 1px solid #ababab; }
.days span { flex: none; width: 22px; height: 14px; text-align: center; border-right: 1px solid #d4d4d4; line-height: 9px; padding-right: 2px; }
.names { font: bold 13px "Noto Sans CJK SC", sans-serif; fill: #000; }
.vs { flex: none; width: 17px; display: flex; flex-direction: column; padding: 1px 0 17px 1px; background: linear-gradient(#f0f0f0, #f0f0f0) content-box; }
.vs .thumb { height: 306px; margin-top: -1px; }
.vs button:last-child { margin-top: auto; }
.mark { position: absolute; left: 315px; top: 78px; width: 104px; height: 515px; border: 5px solid #ed1c24; border-radius: 20px; }
.note { position: absolute; left: 390px; top: 222px; font: 500 19px/25px "Noto Sans CJK SC", sans-serif; color: #ed1c24; }

.status { flex: none; display: flex; align-items: center; height: 23px; background: #31752f; color: #fff; padding-left: 8px; }
.ready { margin-right: 35px; }
.status > svg { margin-right: 3px; }
.views { display: flex; margin-left: auto; align-self: stretch; }
.views button { width: 38px; }
.views .on { background: #225f22; }
.zoom { display: flex; align-items: center; padding: 0 6px 0 3px; }
.zoom button { width: 12px; height: 20px; }
.zoom input { appearance: none; width: 104px; height: 20px; background: linear-gradient(#fff, #fff) 50% 50% / 1px 5px no-repeat, linear-gradient(#fff, #fff) 50% 50% / 100px 1px no-repeat; }
.zoom input::-webkit-slider-thumb { appearance: none; width: 4px; height: 11px; background: #fff; }

.taskbar { flex: none; display: flex; height: 39px; border-top: 1px solid #2b3327; box-shadow: inset 0 1px #b5b2a4; background: linear-gradient(100deg, #66635c 0, #85806f 8%, #8f8977 20%, #7f7a6d 30%, #969080 40%, #9a927d 50%, #a0987f 62%, #8b836e 66%, #716b5e 72%, #66625a 85%, #5f5c55 100%); color: #fff; }
.taskbar > button { width: 62px; }
.taskbar .startb { width: 54px; margin-right: 4px; }
.taskbar .open { border: 1px solid #4b4a43; border-radius: 3px; box-shadow: inset 0 0 0 1px #d5d2c6; background: linear-gradient(135deg, #c4c1b6, #a29c8b); width: 60px; margin: 0 1px; }
.taskbar .lit { background: linear-gradient(135deg, #d9d7cc, #c5c0b0); }
.tray { margin-left: auto; display: flex; align-items: center; gap: 8px; }
.tray svg:nth-of-type(4) { margin: 0 2px; }
.en { font: 12px/16px "Liberation Serif", serif; }
.sm { margin: 0 2px; }
time { text-align: center; line-height: 18px; width: 76px; }
.taskbar .desk { width: 15px; border: 1px solid #3d3b37; box-shadow: inset 0 0 0 1px #a5a297; }
```
